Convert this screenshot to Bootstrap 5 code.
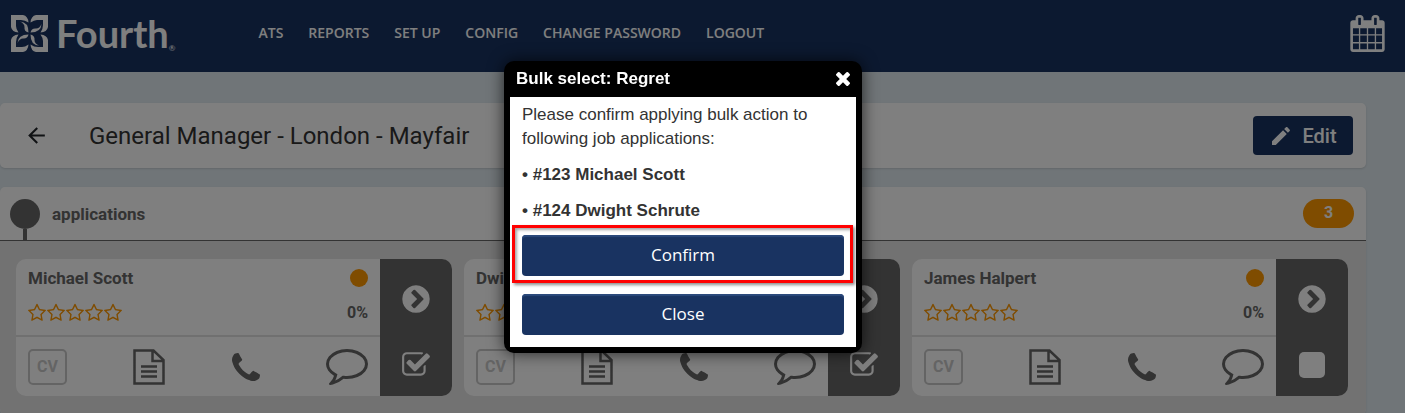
<!DOCTYPE html>
<html lang="en">
<head>
<meta charset="utf-8">
<meta name="viewport" content="width=device-width, initial-scale=1">
<title>General Manager - London - Mayfair</title>
<link href="https://cdn.jsdelivr.net/npm/bootstrap@5.3.0/dist/css/bootstrap.min.css" rel="stylesheet">
<style>
  :root { --navy: #193361; --ink: #666; --amber: #ff9800; --edge: 39px; }
  body { background: #e0eaf0; font-family: Roboto, sans-serif; font-size: 16px; line-height: 24px; color: var(--ink); }
  svg { display: block; fill: currentColor; }
  .topbar { background: var(--navy); min-height: 72px; padding: 0 20px 6px 11px; color: #fff; }
  .topbar .brand-name { font: 700 38px/36px Lato, sans-serif; }
  .brand-reg { font: 400 8px/8px Lato, sans-serif; }
  .main-menu { font: 600 14px/24px "Open Sans", sans-serif; gap: 25px; margin-left: 83px; }
  .page-body { padding: 31px var(--edge) 0 0; gap: 19px; }
  .panel { background: #fff; border-radius: 5px; box-shadow: 0 1px 2px rgba(0,0,0,.12); }
  .title-row { min-height: 65px; padding: 13px 13px 13px 24px; }
  .title-row h1 { font-size: 24px; line-height: 32px; font-weight: 400; color: #333; margin-left: 40px; }
  .edit-btn { --bs-btn-bg: var(--navy); --bs-btn-color: #fff; width: 100px; height: 39px; font-size: 20px; font-weight: 500; line-height: 24px; border-radius: 4px; gap: 9px; }
  .stage-head { height: 54px; border-bottom: 1px solid #666; padding: 0 12px 0 10px; }
  .stage-pin { width: 30px; }
  .stage-pin::before { content: ""; width: 30px; height: 30px; border-radius: 50%; background: var(--ink); margin-top: 12px; }
  .stage-pin::after { content: ""; width: 4px; flex: 1; background: var(--ink); }
  .stage-name { font-size: 17px; font-weight: 700; }
  .count-pill { background: var(--amber); width: 51px; height: 29px; border-radius: 15px; line-height: 27px; margin-bottom: 1px; }
  .stage-body { background: #e4e4e4; padding: 18px 18px 18px 16px; display: grid; grid-template-columns: repeat(3, 1fr); gap: 12px; align-content: start; }
  .applicant { background: #fff; border-radius: 10px; min-height: 137px; overflow: hidden; }
  .applicant-top { padding: 7px 12px 10px; height: 78px; border-bottom: 2px solid #e0e0e0; }
  .applicant-top h2 { font-size: 17px; line-height: 24px; font-weight: 700; }
  .status-dot { width: 18px; height: 18px; border-radius: 50%; background: var(--amber); }
  .stars { color: var(--amber); gap: 1px; }
  .applicant-tools { padding: 0 12px; }
  .plain-btn { background: none; border: 0; padding: 0; color: inherit; }
  .cv-btn { width: 39px; height: 36px; border: 2px solid #c8c8c8; border-radius: 5px; color: #c8c8c8; font-weight: 700; }
  .side-strip { background: var(--ink); color: #fff; width: 72px; padding: 24px 0 16px; }
  .tick { appearance: none; width: 30px; height: 30px; margin: 0; border: 2px solid transparent; border-radius: 7px; background: #fff padding-box; }
  .tick:checked { border: 0; border-radius: 0; background: url("data:image/svg+xml,%3Csvg xmlns='http://www.w3.org/2000/svg' viewBox='0 0 1792 1792'%3E%3Cpath fill='%23fff' d='M1472 930v318q0 119-84.5 203.5t-203.5 84.5h-832q-119 0-203.5-84.5t-84.5-203.5v-832q0-119 84.5-203.5t203.5-84.5h832q63 0 117 25 15 7 18 23 3 17-9 29l-49 49q-10 10-23 10-3 0-9-2-23-6-45-6h-832q-66 0-113 47t-47 113v832q0 66 47 113t113 47h832q66 0 113-47t47-113v-254q0-13 9-22l64-64q10-10 23-10 6 0 12 3 20 8 20 29zm231-489l-814 814q-24 24-57 24t-57-24l-430-430q-24-24-24-57t24-57l110-110q24-24 57-24t57 24l263 263 647-647q24-24 57-24t57 24l110 110q24 24 24 57t-24 57z'/%3E%3C/svg%3E") center / contain no-repeat; }
  .modal { padding-right: var(--edge); }
  .bulk-dialog { max-width: 358px; margin: 61px auto 0; }
  .bulk-content { border: 0; background: #000; border-radius: 10px; padding: 0 6px 6px; box-shadow: 0 0 16px rgba(0,0,0,.7); font-family: "Liberation Sans", Arial, sans-serif; }
  .bulk-head { height: 36px; padding: 0 6px; color: #fff; }
  .bulk-head h2 { font-size: 17px; line-height: 24px; font-weight: 700; }
  .bulk-body { background: #fff; color: #333; padding: 6px 12px 12px; font-size: 17px; line-height: 24px; }
  .bulk-body p { margin-bottom: 12px; }
  .bulk-btn { --bs-btn-bg: var(--navy); --bs-btn-color: #fff; height: 41px; border-radius: 4px; border: 0; padding: 0 12px 2px; font: 400 17px/24px "Open Sans", sans-serif; box-shadow: inset 0 2px 1px #2c4a7c; }
  .callout-box { margin-bottom: 18px; }
  .callout-box::after { content: ""; position: absolute; inset: -10px -9px -7px -10px; border: 3px solid #f00; box-shadow: 2px 2px 3px rgba(0,0,0,.45), inset 2px 2px 3px rgba(0,0,0,.35); pointer-events: none; }
</style>
</head>
<body class="min-vh-100 d-flex flex-column">
<svg class="d-none" aria-hidden="true">
  <symbol id="star" viewBox="0 0 1664 1792"><path d="M1137 1004l306-297-422-62-189-382-189 382-422 62 306 297-73 421 378-199 377 199zm527-357q0 22-26 48l-363 354 86 500q1 7 1 20 0 50-41 50-19 0-40-12l-449-236-449 236q-22 12-40 12-21 0-31.500-14.500t-10.500-35.500q0-6 2-20l86-500-364-354q-25-27-25-48 0-37 56-46l502-73 225-455q19-41 49-41t49 41l225 455 502 73q56 9 56 46z"/></symbol>
  <symbol id="five" viewBox="0 0 95 20"><use href="#star" width="18" height="20"/><use href="#star" x="19" width="18" height="20"/><use href="#star" x="38" width="18" height="20"/><use href="#star" x="57" width="18" height="20"/><use href="#star" x="76" width="18" height="20"/></symbol>
  <symbol id="doc" viewBox="0 0 32 36"><path fill="none" stroke="currentColor" stroke-width="2.500" d="M1.500 1.500H20.500L30.500 11V34.500H1.500zM19.500 1.500V12H30.500M8 17.500H24M8 22.500H24M8 27.500H24"/></symbol>
  <symbol id="phone" viewBox="192 128 1408 1408"><path d="M1600 1240q0 27-10 70.500t-21 68.500q-21 50-122 106-94 51-186 51-27 0-52.500-3.500t-57.500-12.500-47.500-14.500-55.500-20.500-49-18q-98-35-175-83-128-79-264.500-215.500t-215.500-264.500q-48-77-83-175-3-9-18-49t-20.500-55.500-14.500-47.500-12.500-57.500-3.500-52.500q0-92 51-186 56-101 106-122 25-11 68.500-21t70.500-10q14 0 21 3 18 6 53 76 11 19 30 54t35 63.500 31 53.500q3 4 17.500 25t21.500 35.500 7 28.500q0 20-28.500 50t-62 55-62 53-28.500 46q0 9 5 22.500t8.500 20.500 14 24 11.500 19q76 137 174 235t235 174q2 1 19 11.500t24 14 20.500 8.500 22.500 5q18 0 46-28.500t53-62 55-62 50-28.500q14 0 28.500 7t35.500 21.500 25 17.500q25 15 53.500 31t63.500 35 54 30q70 35 76 53 3 7 3 21z"/></symbol>
  <symbol id="bubble" viewBox="0 256 1792 1536"><path d="M896 384q-204 0-381.500 69.500t-282 187.500-104.500 255q0 112 71.500 213.500t201.500 175.500l87 50-27 96q-24 91-70 172 152-63 275-171l43-38 57 6q69 8 130 8 204 0 381.500-69.500t282-187.500 104.500-255-104.500-255-282-187.500-381.500-69.500zm896 512q0 174-120 321.500t-326 233-450 85.500q-70 0-145-8-198 175-460 242-49 14-114 22h-5q-15 0-27-10.500t-16-27.500v-1q-3-4-.5-12t2-10 4.500-9.500l6-9 7-8.500 8-9q7-8 31-34.500t34.500-38 31-39.500 32.500-51 27-59 26-76q-157-89-247.500-220t-90.500-281q0-174 120-321.500t326-233 450-85.500 450 85.500 326 233 120 321.500z"/></symbol>
  <symbol id="go" viewBox="0 0 1792 1792"><path d="M845 1395l454-454q19-19 19-45t-19-45l-454-454q-19-19-45-19t-45 19l-102 102q-19 19-19 45t19 45l307 307-307 307q-19 19-19 45t19 45l102 102q19 19 45 19t45-19zm819-499q0 209-103 385.500t-279.500 279.500-385.500 103-385.500-103-279.500-279.500-103-385.500 103-385.500 279.500-279.500 385.500-103 385.500 103 279.500 279.500 103 385.500z"/></symbol>
</svg>

<header class="topbar d-flex align-items-center">
  <a href="#" class="d-flex align-items-center text-reset text-decoration-none" aria-label="Fourth">
    <svg width="37" height="37" viewBox="0 0 37 37" aria-hidden="true">
      <defs><g id="leaf"><path d="M0 0H12Q17 1 17.500 7.500Q14 5 10 5H5V11Q5 14 7.500 17.500Q1 17 0 12z"/><path d="M9 6.500Q17.500 7 17.500 17.500Q13 16.500 13.500 12Q13.500 8.500 9 6.500z"/></g></defs>
      <use href="#leaf"/><use href="#leaf" transform="rotate(90 18.500 18.500)"/><use href="#leaf" transform="rotate(180 18.500 18.500)"/><use href="#leaf" transform="rotate(270 18.500 18.500)"/>
    </svg>
    <span class="brand-name ms-2">Fourth</span><span class="brand-reg align-self-end">®</span>
  </a>
  <nav class="main-menu d-flex" aria-label="Main">
    <a class="text-reset text-decoration-none" href="#">ATS</a>
    <a class="text-reset text-decoration-none" href="#">REPORTS</a>
    <a class="text-reset text-decoration-none" href="#">SET UP</a>
    <a class="text-reset text-decoration-none" href="#">CONFIG</a>
    <a class="text-reset text-decoration-none" href="#">CHANGE PASSWORD</a>
    <a class="text-reset text-decoration-none" href="#">LOGOUT</a>
  </nav>
  <a href="#" class="text-reset ms-auto" aria-label="Calendar">
    <svg width="35" height="37" viewBox="64 0 1664 1792"><path d="M192 1664h288v-288h-288v288zm352 0h320v-288h-320v288zm-352-352h288v-320h-288v320zm352 0h320v-320h-320v320zm-352-384h288v-288h-288v288zm736 736h320v-288h-320v288zm-384-736h320v-288h-320v288zm768 736h288v-288h-288v288zm-384-352h320v-320h-320v320zm-352-864v-288q0-13-9.500-22.500t-22.500-9.500h-64q-13 0-22.500 9.500t-9.500 22.500v288q0 13 9.500 22.500t22.500 9.500h64q13 0 22.500-9.500t9.500-22.500zm736 864h288v-320h-288v320zm-384-384h320v-288h-320v288zm384 0h288v-288h-288v288zm32-480v-288q0-13-9.500-22.500t-22.500-9.500h-64q-13 0-22.500 9.500t-9.500 22.500v288q0 13 9.500 22.500t22.500 9.500h64q13 0 22.500-9.500t9.500-22.500zm384-64v1280q0 52-38 90t-90 38h-1408q-52 0-90-38t-38-90v-1280q0-52 38-90t90-38h128v-96q0-66 47-113t113-47h64q66 0 113 47t47 113v96h384v-96q0-66 47-113t113-47h64q66 0 113 47t47 113v96h128q52 0 90 38t38 90z"/></svg>
  </a>
</header>

<main class="page-body d-flex flex-column flex-grow-1">
  <section class="panel title-row d-flex align-items-center">
    <a href="#" class="text-dark" aria-label="Back"><svg width="25" height="25" viewBox="0 0 24 24"><path d="M20 11H7.830l5.590-5.590L12 4l-8 8 8 8 1.410-1.410L7.830 13H20v-2z"/></svg></a>
    <h1 class="mb-0">General Manager - London - Mayfair</h1>
    <button type="button" class="btn edit-btn ms-auto p-0 d-flex align-items-center justify-content-center"><svg width="24" height="24" viewBox="0 0 24 24" aria-hidden="true"><path d="M3 17.250V21h3.750L17.810 9.940l-3.750-3.750L3 17.250zM20.710 7.040c.39-.39.39-1.020 0-1.410l-2.340-2.340c-.39-.39-1.020-.39-1.410 0l-1.830 1.830 3.750 3.750 1.830-1.830z"/></svg>Edit</button>
  </section>

  <section class="panel flex-grow-1 d-flex flex-column overflow-hidden">
    <div class="stage-head d-flex align-items-center">
      <span class="stage-pin d-flex flex-column align-items-center align-self-stretch"></span>
      <span class="stage-name ms-2 ps-1">applications</span>
      <span class="count-pill text-white text-center fw-bold ms-auto">3</span>
    </div>
    <div class="stage-body flex-grow-1">
      <article class="applicant d-flex">
        <div class="flex-grow-1 d-flex flex-column">
          <div class="applicant-top d-flex flex-column justify-content-between">
            <div class="d-flex justify-content-between align-items-center"><h2 class="mb-0">Michael Scott</h2><span class="status-dot"></span></div>
            <div class="d-flex justify-content-between align-items-center"><svg class="stars" width="95" height="20" role="img" aria-label="No rating"><use href="#five"/></svg><span class="fw-bold">0%</span></div>
          </div>
          <div class="applicant-tools d-flex justify-content-between align-items-center flex-grow-1">
            <button type="button" class="plain-btn cv-btn">CV</button>
            <button type="button" class="plain-btn" aria-label="Notes"><svg width="32" height="36"><use href="#doc"/></svg></button>
            <button type="button" class="plain-btn" aria-label="Call"><svg width="28" height="28"><use href="#phone"/></svg></button>
            <button type="button" class="plain-btn" aria-label="Message"><svg width="42" height="36"><use href="#bubble"/></svg></button>
          </div>
        </div>
        <div class="side-strip d-flex flex-column align-items-center justify-content-between">
          <button type="button" class="plain-btn" aria-label="Open Michael Scott"><svg width="32" height="32"><use href="#go"/></svg></button>
          <input class="tick" type="checkbox" aria-label="Select Michael Scott" checked>
        </div>
      </article>
      <article class="applicant d-flex">
        <div class="flex-grow-1 d-flex flex-column">
          <div class="applicant-top d-flex flex-column justify-content-between">
            <div class="d-flex justify-content-between align-items-center"><h2 class="mb-0">Dwight Schrute</h2><span class="status-dot"></span></div>
            <div class="d-flex justify-content-between align-items-center"><svg class="stars" width="95" height="20" role="img" aria-label="No rating"><use href="#five"/></svg><span class="fw-bold">0%</span></div>
          </div>
          <div class="applicant-tools d-flex justify-content-between align-items-center flex-grow-1">
            <button type="button" class="plain-btn cv-btn">CV</button>
            <button type="button" class="plain-btn" aria-label="Notes"><svg width="32" height="36"><use href="#doc"/></svg></button>
            <button type="button" class="plain-btn" aria-label="Call"><svg width="28" height="28"><use href="#phone"/></svg></button>
            <button type="button" class="plain-btn" aria-label="Message"><svg width="42" height="36"><use href="#bubble"/></svg></button>
          </div>
        </div>
        <div class="side-strip d-flex flex-column align-items-center justify-content-between">
          <button type="button" class="plain-btn" aria-label="Open Dwight Schrute"><svg width="32" height="32"><use href="#go"/></svg></button>
          <input class="tick" type="checkbox" aria-label="Select Dwight Schrute" checked>
        </div>
      </article>
      <article class="applicant d-flex">
        <div class="flex-grow-1 d-flex flex-column">
          <div class="applicant-top d-flex flex-column justify-content-between">
            <div class="d-flex justify-content-between align-items-center"><h2 class="mb-0">James Halpert</h2><span class="status-dot"></span></div>
            <div class="d-flex justify-content-between align-items-center"><svg class="stars" width="95" height="20" role="img" aria-label="No rating"><use href="#five"/></svg><span class="fw-bold">0%</span></div>
          </div>
          <div class="applicant-tools d-flex justify-content-between align-items-center flex-grow-1">
            <button type="button" class="plain-btn cv-btn">CV</button>
            <button type="button" class="plain-btn" aria-label="Notes"><svg width="32" height="36"><use href="#doc"/></svg></button>
            <button type="button" class="plain-btn" aria-label="Call"><svg width="28" height="28"><use href="#phone"/></svg></button>
            <button type="button" class="plain-btn" aria-label="Message"><svg width="42" height="36"><use href="#bubble"/></svg></button>
          </div>
        </div>
        <div class="side-strip d-flex flex-column align-items-center justify-content-between">
          <button type="button" class="plain-btn" aria-label="Open James Halpert"><svg width="32" height="32"><use href="#go"/></svg></button>
          <input class="tick" type="checkbox" aria-label="Select James Halpert">
        </div>
      </article>
    </div>
  </section>
</main>

<div class="modal-backdrop show"></div>
<div class="modal show d-block" role="dialog" aria-modal="true" aria-labelledby="bulkTitle">
  <div class="modal-dialog bulk-dialog">
    <div class="modal-content bulk-content">
      <div class="bulk-head d-flex align-items-center justify-content-between">
        <h2 class="mb-0" id="bulkTitle">Bulk select: Regret</h2>
        <button type="button" class="plain-btn" aria-label="Dismiss"><svg width="14" height="14" viewBox="302 302 1188 1188"><path d="M1490 1322q0 40-28 68l-136 136q-28 28-68 28t-68-28l-294-294-294 294q-28 28-68 28t-68-28l-136-136q-28-28-28-68t28-68l294-294-294-294q-28-28-28-68t28-68l136-136q28-28 68-28t68 28l294 294 294-294q28-28 68-28t68 28l136 136q28 28 28 68t-28 68l-294 294 294 294q28 28 28 68z" transform="translate(0 -64)"/></svg></button>
      </div>
      <div class="bulk-body">
        <p>Please confirm applying bulk action to following job applications:</p>
        <p class="fw-bold">• #123 Michael Scott</p>
        <p class="fw-bold">• #124 Dwight Schrute</p>
        <div class="callout-box position-relative"><button type="button" class="btn bulk-btn w-100">Confirm</button></div>
        <button type="button" class="btn bulk-btn w-100">Close</button>
      </div>
    </div>
  </div>
</div>
<script src="https://cdn.jsdelivr.net/npm/bootstrap@5.3.0/dist/js/bootstrap.bundle.min.js"></script>
</body>
</html>
